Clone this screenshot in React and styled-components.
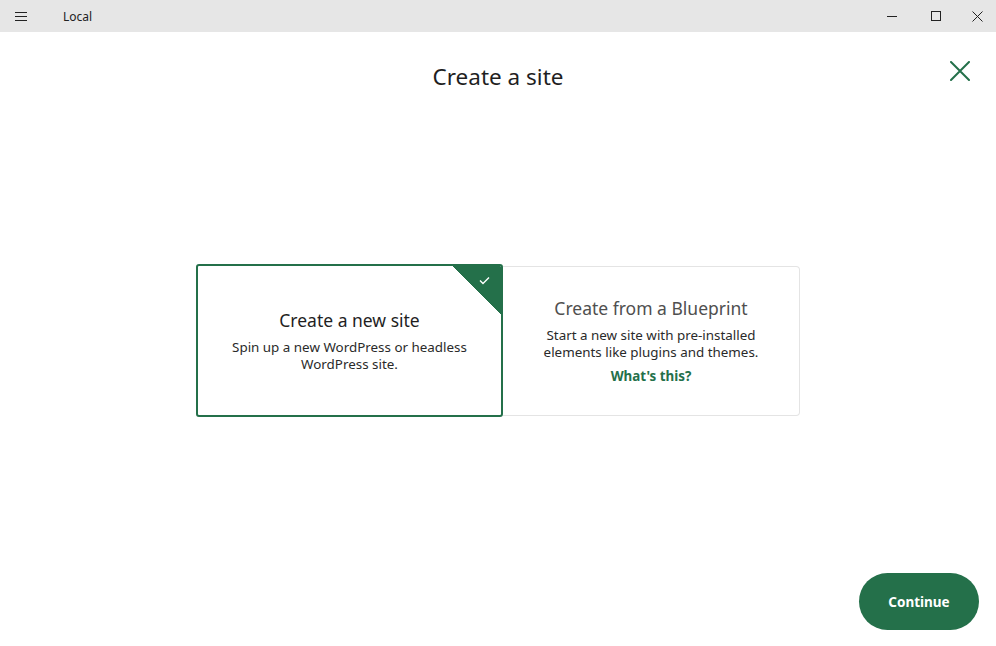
import React, { useState } from 'react'
import styled, { createGlobalStyle } from 'styled-components'

const GlobalStyle = createGlobalStyle`
    * { box-sizing: border-box; }
    body {
        margin: 0;
        background: #ffffff;
        font-family: 'Noto Sans', 'Open Sans', sans-serif;
        color: #222;
    }
`

const green = '#24704a'

const Window = styled.div`
    height: 100vh;
    display: flex;
    flex-direction: column;
`

const TitleBar = styled.div`
    height: 32px;
    background: #e6e6e6;
    display: flex;
    align-items: center;
`

const MenuButton = styled.div`
    width: 42px;
    height: 32px;
    display: flex;
    align-items: center;
    justify-content: center;
`

const AppName = styled.span`
    margin-left: 21px;
    font-size: 12px;
    color: #222;
    font-family: 'Noto Sans', sans-serif;
`

const WinControls = styled.div`
    margin-left: auto;
    display: flex;
`

const WinButton = styled.div`
    width: ${p => (p.$narrow ? '38px' : '44px')};
    height: 32px;
    display: flex;
    align-items: center;
    justify-content: center;
`

const Main = styled.main`
    flex: 1;
    display: grid;
    grid-template-rows: auto 1fr auto;
`

const Header = styled.header`
    display: grid;
    grid-template-columns: 1fr auto 1fr;
    align-items: start;
    padding: 29px 26px 0;
`

const Title = styled.h1`
    grid-column: 2;
    margin: 0;
    font-size: 22.5px;
    font-weight: 400;
    line-height: 32px;
    color: #1f1f1f;
`

const CloseButton = styled.button`
    justify-self: end;
    margin-top: 0;
    border: 0;
    background: none;
    padding: 0;
    cursor: pointer;
    display: flex;
`

const Center = styled.section`
    display: flex;
    align-items: center;
    justify-content: center;
    padding-top: 15px;
`

const Cards = styled.div`
    display: flex;
    align-items: center;
`

const Card = styled.div`
    position: relative;
    overflow: hidden;
    display: flex;
    flex-direction: column;
    align-items: center;
    justify-content: center;
    text-align: center;
    border-radius: 3px;
    cursor: pointer;
    width: ${p => (p.$selected ? '307px' : '297px')};
    height: ${p => (p.$selected ? '153px' : '150px')};
    border: ${p => (p.$selected ? `2px solid ${green}` : '1px solid #e4e4e4')};
    ${p => !p.$selected && 'border-left: 0; border-radius: 0 4px 4px 0;'}
    padding: 0 20px;
`

const Corner = styled.div`
    position: absolute;
    top: -1px;
    right: -1px;
    width: 51px;
    height: 51px;
    background: linear-gradient(45deg, transparent 50%, ${green} 50.5%);
`

const CheckMark = styled.svg`
    position: absolute;
    top: 11px;
    right: 12px;
`

const CardTitle = styled.h2`
    margin: 0 0 8px;
    font-size: 17.5px;
    font-weight: 400;
    line-height: 22px;
    color: ${p => (p.$selected ? '#1f1f1f' : '#4f4f4f')};
`

const CardText = styled.p`
    margin: 0;
    font-size: 13.4px;
    line-height: 17px;
    color: #2a2a2a;
`

const HelpLink = styled.a`
    margin-top: 6px;
    font-size: 13.4px;
    font-weight: 700;
    color: ${green};
    text-decoration: none;
`

const Footer = styled.footer`
    display: flex;
    justify-content: flex-end;
    padding: 0 17px 16px;
`

const ContinueButton = styled.button`
    width: 120px;
    height: 57px;
    border: 0;
    border-radius: 29px;
    background: ${green};
    color: #fff;
    font-family: 'Noto Sans', sans-serif;
    font-size: 13.5px;
    font-weight: 700;
    cursor: pointer;
`

const options = [
    {
        id: 'new',
        title: 'Create a new site',
        text: ['Spin up a new WordPress or headless', 'WordPress site.'],
    },
    {
        id: 'blueprint',
        title: 'Create from a Blueprint',
        text: ['Start a new site with pre-installed', 'elements like plugins and themes.'],
        link: "What's this?",
    },
]

const App = () => {
    const [selected, setSelected] = useState('new')

    return (
        <Window>
            <GlobalStyle />
            <TitleBar>
                <MenuButton>
                    <svg width="14" height="11" viewBox="0 0 14 11">
                        <path d="M1 1.5h12M1 5.5h12M1 9.5h12" stroke="#222" strokeWidth="1" />
                    </svg>
                </MenuButton>
                <AppName>Local</AppName>
                <WinControls>
                    <WinButton>
                        <svg width="10" height="10" viewBox="0 0 10 10">
                            <path d="M0 5.5h10" stroke="#222" strokeWidth="1" />
                        </svg>
                    </WinButton>
                    <WinButton>
                        <svg width="10" height="10" viewBox="0 0 10 10">
                            <rect x="0.5" y="0.5" width="9" height="9" fill="none" stroke="#222" strokeWidth="1" />
                        </svg>
                    </WinButton>
                    <WinButton $narrow>
                        <svg width="11" height="11" viewBox="0 0 11 11">
                            <path d="M0.5 0.5l10 10M10.5 0.5l-10 10" stroke="#222" strokeWidth="1" />
                        </svg>
                    </WinButton>
                </WinControls>
            </TitleBar>
            <Main>
                <Header>
                    <Title>Create a site</Title>
                    <CloseButton aria-label="Close">
                        <svg width="20" height="20" viewBox="0 0 20 20">
                            <path d="M1 1l18 18M19 1L1 19" stroke={green} strokeWidth="2" strokeLinecap="round" />
                        </svg>
                    </CloseButton>
                </Header>
                <Center>
                    <Cards>
                        {options.map(option => (
                            <Card
                                key={option.id}
                                $selected={selected === option.id}
                                onClick={() => setSelected(option.id)}
                            >
                                {selected === option.id && (
                                    <Corner>
                                        <CheckMark width="11" height="9" viewBox="0 0 11 9">
                                            <path d="M1 4.5l3 3L10 1.5" stroke="#fff" strokeWidth="1.4" fill="none" />
                                        </CheckMark>
                                    </Corner>
                                )}
                                <CardTitle $selected={selected === option.id}>{option.title}</CardTitle>
                                <CardText>
                                    {option.text[0]}
                                    <br />
                                    {option.text[1]}
                                </CardText>
                                {option.link && <HelpLink href="#">{option.link}</HelpLink>}
                            </Card>
                        ))}
                    </Cards>
                </Center>
                <Footer>
                    <ContinueButton>Continue</ContinueButton>
                </Footer>
            </Main>
        </Window>
    )
}

export default App
